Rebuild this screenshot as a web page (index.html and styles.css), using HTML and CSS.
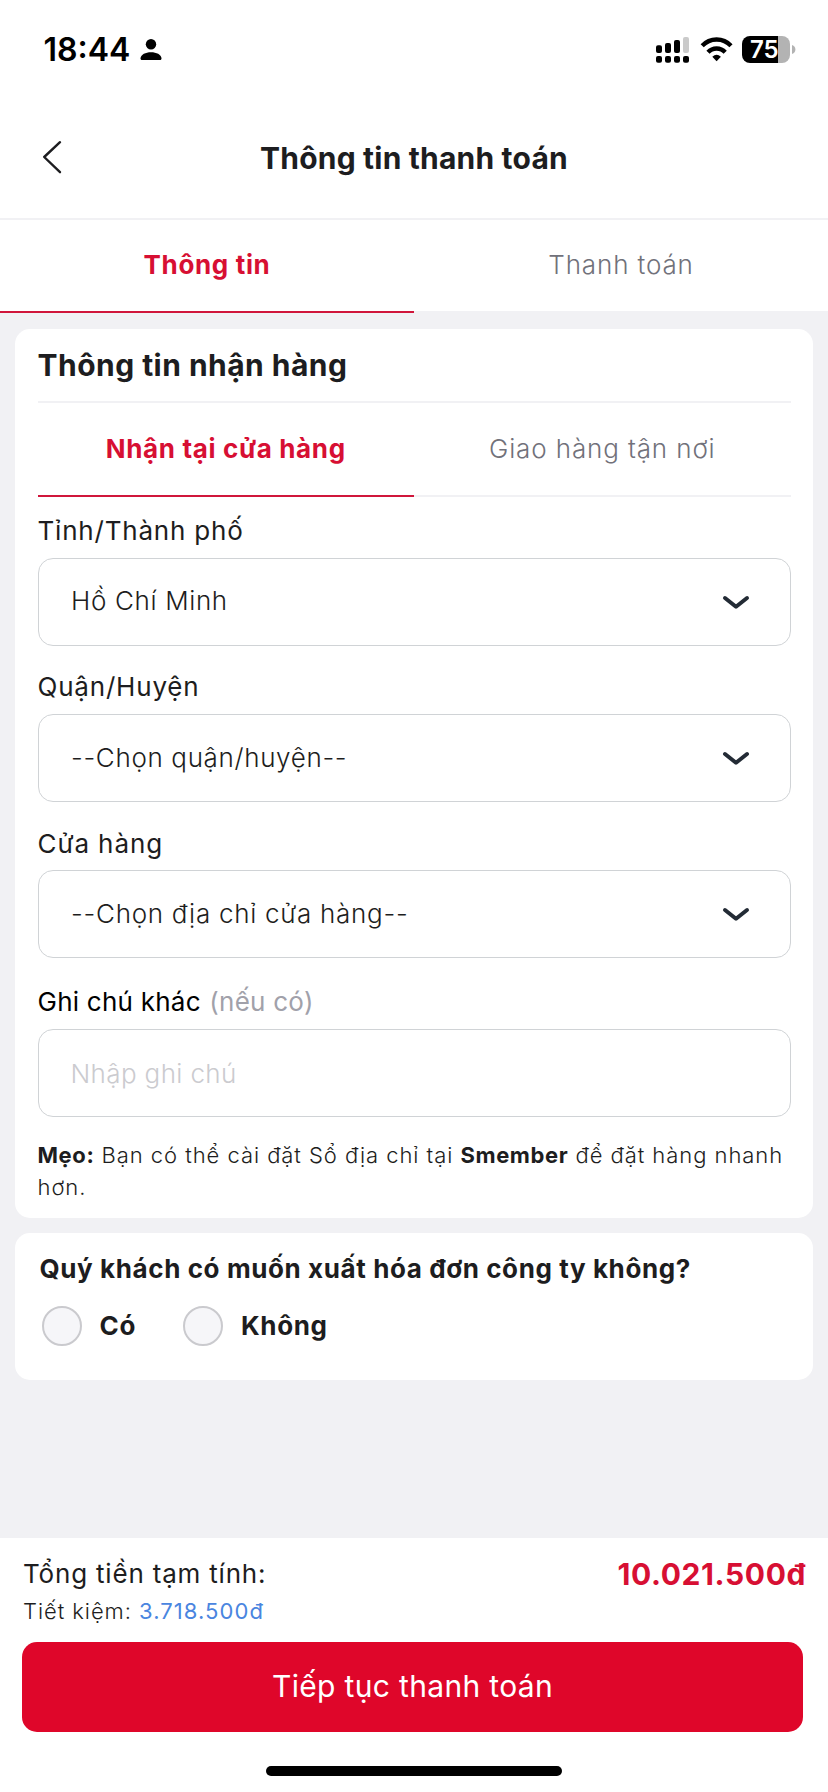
FILE: index.html
```html
<!DOCTYPE html>
<html lang="vi">
<head>
<meta charset="utf-8">
<title>Thông tin thanh toán</title>
<link rel="stylesheet" href="styles.css">
</head>
<body>
<div class="screen">
  <div class="status">
    <div class="status-left">
      <span class="time">18:44</span>
      <svg class="person" width="22" height="23" viewBox="0 0 22 23"><circle cx="11" cy="6.2" r="5.2"/><path d="M.5 20.2C.9 16.4 5.5 14.2 11 14.2s10.100 2.200 10.500 6c.1 1.200-.5 1.800-1.600 1.800H2.100C1 22 .4 21.400 .5 20.200z"/></svg>
    </div>
    <div class="status-right">
      <svg width="33" height="27" viewBox="0 0 33 27"><rect x="18" y="4" width="6" height="13" rx="2"/><rect x="9" y="7" width="6" height="10" rx="2"/><rect x="0" y="9.200" width="6" height="7.800" rx="2"/><rect x="27" y="1" width="6" height="16" rx="2" fill="#cacaca"/><rect x="0" y="20" width="6" height="6.700" rx="2"/><rect x="9" y="20" width="6" height="6.700" rx="2"/><rect x="18" y="20" width="6" height="6.700" rx="2"/><rect x="27" y="20" width="6" height="6.700" rx="2"/></svg>
      <svg class="wifi" width="33" height="27" viewBox="0 0 33 27"><path d="M2.200 9.800A19.600 19.600 0 0 1 31 9.800M8 16.300A11.600 11.600 0 0 1 25.200 16.300" fill="none" stroke="#000" stroke-width="4.300"/><path d="M16.600 25.200L12.300 20.800Q16.600 16.800 20.900 20.800Z"/></svg>
      <div class="battery"><span class="level">75</span></div>
      <svg class="nub" width="4" height="9" viewBox="0 0 4 9"><path d="M0 0Q3.400 1.300 3.400 4.500T0 9z" fill="#b3b3b3"/></svg>
    </div>
  </div>

  <header class="header">
    <svg class="back" width="20" height="34" viewBox="0 0 20 34"><path d="M18 2.200L2.200 17L18 32.200" fill="none" stroke="#1d1d20" stroke-width="2.400" stroke-linecap="round" stroke-linejoin="round"/></svg>
    <h1 class="title">Thông tin thanh toán</h1>
  </header>

  <nav class="tabs steps">
    <div class="tab active">Thông tin</div>
    <div class="tab">Thanh toán</div>
  </nav>

  <main class="content">
    <section class="card delivery">
      <h2 class="section-title">Thông tin nhận hàng</h2>
      <div class="tabs methods">
        <div class="tab active">Nhận tại cửa hàng</div>
        <div class="tab">Giao hàng tận nơi</div>
      </div>
      <div class="fields">
        <div class="field">
          <div class="label">Tỉnh/Thành phố</div>
          <div class="control"><span class="city">Hồ Chí Minh</span><svg class="chevron" width="28" height="16" viewBox="0 0 28 16"><path d="M3 3L14 11.700L25 3"/></svg></div>
        </div>
        <div class="field">
          <div class="label">Quận/Huyện</div>
          <div class="control"><span>--Chọn quận/huyện--</span><svg class="chevron" width="28" height="16" viewBox="0 0 28 16"><path d="M3 3L14 11.700L25 3"/></svg></div>
        </div>
        <div class="field">
          <div class="label store">Cửa hàng</div>
          <div class="control"><span class="store-value">--Chọn địa chỉ cửa hàng--</span><svg class="chevron" width="28" height="16" viewBox="0 0 28 16"><path d="M3 3L14 11.700L25 3"/></svg></div>
        </div>
        <div class="field note">
          <div class="label">Ghi chú khác <span class="optional">(nếu có)</span></div>
          <div class="control"><span class="placeholder">Nhập ghi chú</span></div>
        </div>
      </div>
      <p class="tip"><b>Mẹo:</b> Bạn có thể cài đặt Sổ địa chỉ tại <b>Smember</b> để đặt hàng nhanh hơn.</p>
    </section>

    <section class="card invoice">
      <div class="question">Quý khách có muốn xuất hóa đơn công ty không?</div>
      <div class="options">
        <div class="option"><span class="radio"></span><span class="answer">Có</span></div>
        <div class="option"><span class="radio"></span><span class="answer">Không</span></div>
      </div>
    </section>
  </main>

  <footer class="footer">
    <div class="totals">
      <div class="summary">
        <div class="total-label">Tổng tiền tạm tính:</div>
        <div class="saving">Tiết kiệm: <span class="saving-value">3.718.500đ</span></div>
      </div>
      <div class="price">10.021.500đ</div>
    </div>
    <div class="button">Tiếp tục thanh toán</div>
    <div class="home-bar"></div>
  </footer>
</div>
</body>
</html>
```
FILE: styles.css
```css
* { box-sizing: border-box; }
body {
  margin: 0;
  background: #f1f1f4;
  color: #1d1d20;
  font-family: Inter, "Noto Sans", sans-serif;
  font-size: 26px;
  font-weight: 400;
}
h1, h2, p { margin: 0; }
svg { display: block; flex: none; }
.screen {
  width: 828px;
  height: 1792px;
  display: flex;
  flex-direction: column;
  overflow: hidden;
}

/* Status bar */
.status {
  height: 100px;
  background: #fff;
  display: flex;
  justify-content: space-between;
  padding: 0 33px 0 43.500px;
}
.status-left, .status-right { display: flex; height: 99px; align-items: center; }
.status-right { margin-right: -1px; }
.time { font-size: 32px; font-weight: 600; color: #000; }
.person { margin-left: 10px; }
.wifi { margin-left: 11px; }
.battery {
  margin-left: 9px;
  width: 48px;
  height: 27px;
  border-radius: 8px;
  background: linear-gradient(90deg, #000 36px, #b3b3b3 36px);
  color: #fff;
  font-size: 24px;
  font-weight: 600;
  line-height: 27px;
}
.level { margin-left: 8px; letter-spacing: -.2px; }
.nub { margin-left: 2px; }

/* Header */
.header {
  height: 120px;
  background: #fff;
  border-bottom: 2px solid #f1f1f4;
  display: grid;
  grid-template-columns: 41.500px 1fr 41.500px;
  align-items: center;
  padding-bottom: 2px;
}
.back { grid-column: 1; justify-self: end; margin: 0 -20px 3px 0; }
.title {
  grid-column: 2;
  font-size: 30px;
  line-height: 36px;
  font-weight: 700;
  text-align: center;
  letter-spacing: .2px;
}

/* Tabs */
.tabs { display: grid; grid-template-columns: 1fr 1fr; text-align: center; }
.tab {
  color: #71717a;
  font-weight: 300;
  letter-spacing: .87px;
  border-bottom: 2px solid #f1f1f4;
}
.tab.active {
  color: #d70f33;
  font-weight: 700;
  letter-spacing: .65px;
  border-bottom-color: #d0163b;
}
.steps { background: #fff; }
.steps .tab { height: 93px; line-height: 89px; }
.methods .tab { height: 94px; line-height: 91px; }

/* Cards */
.content { flex: 1; padding: 16px 15px 0; display: flex; flex-direction: column; gap: 15px; }
.card { background: #fff; border-radius: 15px; }
.delivery { height: 889px; padding: 0 22.500px; }
.section-title {
  height: 74px;
  line-height: 72px;
  font-size: 30px;
  font-weight: 700;
  letter-spacing: .47px;
  border-bottom: 2px solid #f1f1f4;
}
.fields { padding-top: 16.500px; display: flex; flex-direction: column; gap: 24px; }
.label { line-height: 34px; letter-spacing: .8px; margin-bottom: 10px; }
.label.store { letter-spacing: .9px; padding-top: 1px; margin-bottom: 9px; }
.control {
  height: 88px;
  border: 1px solid #d0d3d6;
  border-radius: 15px;
  display: flex;
  align-items: center;
  justify-content: space-between;
  padding: 0 40px 0 32.500px;
  font-weight: 300;
  letter-spacing: .65px;
}
.city { padding-bottom: 2px; }
.store-value { letter-spacing: .72px; }
.chevron { margin-top: 2px; fill: none; stroke: #232b35; stroke-width: 4; stroke-linecap: round; stroke-linejoin: round; }
.note { margin-top: 2px; }
.note .label { color: #000; letter-spacing: .24px; padding-top: 1px; }
.note .optional { color: #a1a1aa; letter-spacing: .25px; margin-left: 1px; }
.placeholder { color: #cbcbcf; letter-spacing: .36px; margin-left: -.5px; padding-top: 2px; }
.tip {
  margin-top: 22px;
  font-size: 22px;
  line-height: 32px;
  font-weight: 300;
  letter-spacing: .95px;
}
.tip b { font-weight: 700; letter-spacing: .6px; }

/* Invoice question */
.invoice { height: 147px; padding: 19px 24.500px 0; font-weight: 700; }
.question { line-height: 34px; letter-spacing: .6px; }
.options { display: flex; gap: 47.500px; margin: 20px 0 0 2.500px; letter-spacing: .65px; }
.option { display: flex; align-items: center; height: 40px; gap: 17.500px; }
.radio { width: 40px; height: 40px; border-radius: 50%; border: 2.500px solid #cacace; background: #f6f6f9; }
.answer { padding-bottom: 2px; }

/* Footer */
.footer { height: 254px; background: #fff; padding: 18px 22px 0; }
.totals { height: 86px; display: flex; justify-content: space-between; padding: 0 0 0 1px; }
.total-label { line-height: 34px; padding-top: 1px; letter-spacing: .81px; }
.saving { font-size: 22px; line-height: 30px; margin-top: 5px; font-weight: 300; letter-spacing: .93px; }
.saving-value { color: #4a85e0; font-weight: 400; letter-spacing: 1.080px; }
.price { font-size: 30px; line-height: 36px; font-weight: 700; color: #d70f33; letter-spacing: .61px; }
.button {
  width: 781px;
  height: 90px;
  border-radius: 15px;
  background: #df062a;
  color: #fff;
  font-size: 30px;
  line-height: 88px;
  text-align: center;
  letter-spacing: .33px;
}
.home-bar { width: 296px; height: 10px; border-radius: 5px; background: #000; margin: 34px auto 0; }
```
